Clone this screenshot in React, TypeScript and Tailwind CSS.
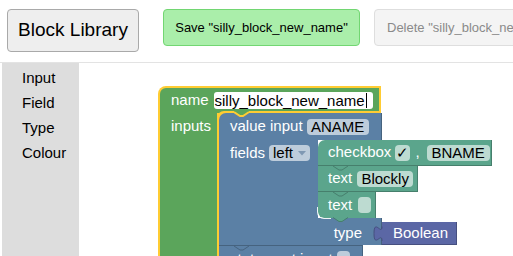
import React from "react";

function Notch({ stroke, fill, className }: { stroke: string; fill?: string; className: string }) {
  return (
    <svg className={className} width="16" height="7" viewBox="0 0 16 7">
      {fill ? <path d="M0 0 L0 1 L6 5 L9 5 L15 1 L15 0 Z" fill={fill} /> : null}
      <path d="M0 1 L6 5 L9 5 L15 1" fill="none" stroke={stroke} strokeWidth={fill ? 2 : 1} />
    </svg>
  );
}

function Field({ children, className }: { children?: React.ReactNode; className: string }) {
  return (
    <span className={`h-[16px] leading-[16px] rounded-[4px] px-[4px] text-black text-[15px] inline-flex items-center justify-center ${className}`}>
      {children}
    </span>
  );
}

export default function App() {
  return (
    <div className="w-[513px] h-[256px] overflow-hidden bg-white font-['Liberation_Sans',Arial,Helvetica,sans-serif] flex flex-col">
      <header className="h-[63px] shrink-0 border-b border-[#e3e3e3] flex items-start pt-[9px] pl-[7px] whitespace-nowrap">
        <button className="shrink-0 w-[132px] h-[43px] bg-[#eeeeee] border border-[#a9a9a9] rounded-[4px] text-[19px] text-black">
          Block Library
        </button>
        <button className="shrink-0 ml-[24px] w-[197px] h-[37px] bg-[#aaeeaa] border border-[#72d672] rounded-[4px] text-[13px] text-black">
          Save "silly_block_new_name"
        </button>
        <button className="shrink-0 ml-[14px] w-[220px] h-[37px] bg-[#f4f4f4] border border-[#dedede] rounded-[4px] text-[13px] text-[#8a8a8a] text-left pl-[12px]">
          Delete "silly_block_new_name"
        </button>
      </header>

      <div className="flex flex-1 min-h-0">
        <aside className="shrink-0 ml-[2px] w-[77px] bg-[#dddddd] pl-[20px] pt-[1.5px] text-[15px] leading-[25px] text-black">
          <div>Input</div>
          <div>Field</div>
          <div>Type</div>
          <div>Colour</div>
        </aside>

        <main className="relative flex-1 overflow-hidden">
          <div className="absolute left-[79px] top-[23px] flex flex-col w-max text-white text-[15px]">
            {/* top arm */}
            <div className="w-[223px] h-[27px] bg-[#5ba55b] border-t-2 border-l-2 border-r-2 border-[#ffcc33] rounded-tl-[8px] flex items-center pl-[11px] gap-[5px]">
              <span>name</span>
              <span className="w-[159px] h-[17px] leading-[17px] bg-white rounded-[3px] text-black text-[15px] pl-[1px] flex items-center">
                silly_block_new_name
                <span className="w-[1px] h-[15px] bg-black ml-[1px]" />
              </span>
            </div>

            <div className="flex">
              {/* left column of C */}
              <div className="w-[61px] bg-[#5ba55b] border-l-2 border-r-2 border-[#ffcc33]">
                <div className="h-[26px] flex items-center pl-[11px]">inputs</div>
              </div>

              {/* statement stack */}
              <div className="flex flex-col">
                {/* value input block */}
                <div className="relative w-[163px] h-[27px] bg-[#5b80a5] rounded-tl-[7px] shadow-[-2px_-2px_0_0_#ffcc33] border-r border-[#46637f] flex items-center pl-[11px] gap-[4px]">
                  <Notch className="absolute left-[15px] -top-[2px]" stroke="#ffcc33" fill="#5ba55b" />
                  <span>value input</span>
                  <Field className="w-[62px] bg-[#bdccdb]">ANAME</Field>
                </div>

                <div className="flex h-[78px]">
                  <div className="w-[99px] bg-[#5b80a5]">
                    <div className="h-[26px] flex items-center pl-[11px] gap-[4px]">
                      <span>fields</span>
                      <span className="w-[41px] h-[16px] leading-[16px] rounded-[4px] bg-[#bdccdb] text-black flex items-center pl-[4px] gap-[5px]">
                        left
                        <svg width="8" height="5" viewBox="0 0 8 5">
                          <path d="M0 0 L8 0 L4 4.5 Z" fill="#7f98b3" />
                        </svg>
                      </span>
                    </div>
                  </div>

                  <div className="flex flex-col items-start">
                    <div className="w-[174px] h-[26px] bg-[#5ba58c] rounded-tl-[7px] border-r border-b border-[#467f6c] flex items-center pl-[10px] gap-[4px]">
                      <span>checkbox</span>
                      <Field className="w-[15px] px-0 bg-[#bddbd1] text-[14px]">✓</Field>
                      <span className="ml-[1px]">,</span>
                      <Field className="ml-[3px] w-[63px] bg-[#bddbd1]">BNAME</Field>
                    </div>
                    <div className="relative w-[100px] h-[26px] bg-[#5ba58c] border-r border-b border-[#467f6c] flex items-center pl-[10px] gap-[5px]">
                      <Notch className="absolute left-[15px] -top-[1px]" stroke="#467f6c" />
                      <span>text</span>
                      <Field className="w-[56px] bg-[#bddbd1]">Blockly</Field>
                    </div>
                    <div className="relative w-[58px] h-[26px] bg-[#5ba58c] rounded-bl-[6px] border-r border-[#467f6c] flex items-center pl-[10px] gap-[6px]">
                      <Notch className="absolute left-[15px] -top-[1px]" stroke="#467f6c" />
                      <span className="absolute -left-[1px] bottom-[-1px] w-[14px] h-[12px] border-l border-b border-white/90 rounded-bl-[7px]" />
                      <span>text</span>
                      <Field className="w-[13px] px-0 bg-[#bddbd1]" />
                      <svg className="absolute left-[15px] -bottom-[5px]" width="16" height="6" viewBox="0 0 16 6">
                        <path d="M0 0 L6 4.5 L9 4.5 L15 0 Z" fill="#5ba58c" />
                        <path d="M0 0.5 L6 4.5 L9 4.5 L15 0.5" fill="none" stroke="#467f6c" strokeWidth="1" />
                      </svg>
                    </div>
                  </div>
                </div>

                <div className="flex items-end">
                  <div className="w-[163px] h-[27px] pt-[4px] bg-[#5b80a5] border-r border-[#46637f] flex items-center justify-end pr-[19px]">
                    type
                  </div>
                  <div className="relative w-[75px] h-[23px] bg-[#5b67a5] border-r border-b border-[#464f7f] flex items-center pl-[11px]">
                    <svg className="absolute -left-[9px] top-[4px]" width="10" height="16" viewBox="0 0 10 16">
                      <path d="M9 0.5 C9 10 1 -8 1 7.5 S9 5 9 15" fill="#5b67a5" stroke="#464f7f" strokeWidth="1" />
                    </svg>
                    Boolean
                  </div>
                </div>

                {/* statement input block */}
                <div className="relative w-[144px] h-[27px] bg-[#5b80a5] border-t border-r border-[#46637f] flex items-center pl-[11px] gap-[4px]">
                  <Notch className="absolute left-[15px] -top-[1px]" stroke="#46637f" />
                  <span>statement input</span>
                  <Field className="w-[13px] px-0 bg-[#bdccdb]" />
                </div>
              </div>
            </div>
          </div>
        </main>
      </div>
    </div>
  );
}
